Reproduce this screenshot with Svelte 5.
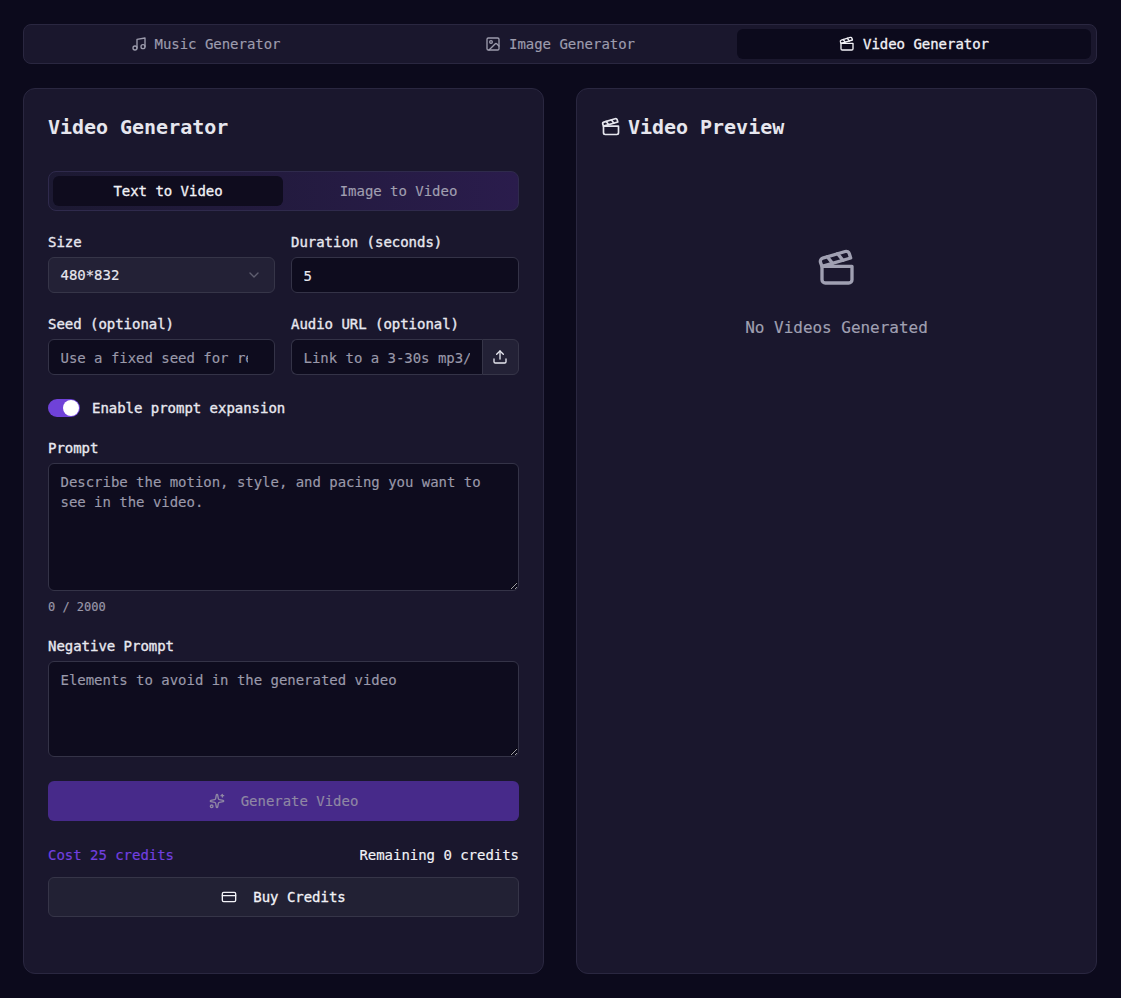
<script lang="ts">
  let prompt = $state('');
  let negative = $state('');
  let expand = $state(true);
  let mode = $state('text');
  const tabs = [
    { id: 'music', label: 'Music Generator' },
    { id: 'image', label: 'Image Generator' },
    { id: 'video', label: 'Video Generator' }
  ];
  let active = $state('video');
</script>

{#snippet clapper(size)}
  <svg width={size} height={size} viewBox="0 0 24 24" fill="none" stroke="currentColor" stroke-width="2" stroke-linecap="round" stroke-linejoin="round">
    <path d="M20.2 6 3 11l-.9-2.4c-.3-1.1.3-2.2 1.3-2.5l13.5-4c1.1-.3 2.2.3 2.5 1.3Z" />
    <path d="m6.2 5.3 3.1 3.9" />
    <path d="m12.4 3.4 3.1 4" />
    <path d="M3 11h18v8a2 2 0 0 1-2 2H5a2 2 0 0 1-2-2Z" />
  </svg>
{/snippet}

<div class="page">
  <nav class="tabs">
    {#each tabs as tab}
      <button class="tab" class:active={active === tab.id} onclick={() => (active = tab.id)}>
        {#if tab.id === 'music'}
          <svg width="16" height="16" viewBox="0 0 24 24" fill="none" stroke="currentColor" stroke-width="2" stroke-linecap="round" stroke-linejoin="round">
            <path d="M9 18V5l12-2v13" /><circle cx="6" cy="18" r="3" /><circle cx="18" cy="16" r="3" />
          </svg>
        {:else if tab.id === 'image'}
          <svg width="16" height="16" viewBox="0 0 24 24" fill="none" stroke="currentColor" stroke-width="2" stroke-linecap="round" stroke-linejoin="round">
            <rect width="18" height="18" x="3" y="3" rx="2" ry="2" /><circle cx="9" cy="9" r="2" /><path d="m21 15-3.086-3.086a2 2 0 0 0-2.828 0L6 21" />
          </svg>
        {:else}
          {@render clapper(16)}
        {/if}
        {tab.label}
      </button>
    {/each}
  </nav>

  <main class="columns">
    <section class="card form">
      <h2>Video Generator</h2>

      <div class="mode">
        <button class:on={mode === 'text'} onclick={() => (mode = 'text')}>Text to Video</button>
        <button class:on={mode === 'image'} onclick={() => (mode = 'image')}>Image to Video</button>
      </div>

      <div class="pair">
        <div class="field">
          <span class="label">Size</span>
          <div class="select">
            <span>480*832</span>
            <svg width="16" height="16" viewBox="0 0 24 24" fill="none" stroke="currentColor" stroke-width="2" stroke-linecap="round" stroke-linejoin="round"><path d="m6 9 6 6 6-6" /></svg>
          </div>
        </div>
        <div class="field">
          <span class="label">Duration (seconds)</span>
          <input class="input" type="text" value="5" />
        </div>
      </div>

      <div class="pair second">
        <div class="field">
          <span class="label">Seed (optional)</span>
          <input class="input seed" type="text" placeholder="Use a fixed seed for reproducible results" />
        </div>
        <div class="field">
          <span class="label">Audio URL (optional)</span>
          <div class="group">
            <input class="input" type="text" placeholder="Link to a 3-30s mp3/wav file" />
            <button class="upload" aria-label="Upload">
              <svg width="16" height="16" viewBox="0 0 24 24" fill="none" stroke="currentColor" stroke-width="2" stroke-linecap="round" stroke-linejoin="round">
                <path d="M21 15v4a2 2 0 0 1-2 2H5a2 2 0 0 1-2-2v-4" /><polyline points="17 8 12 3 7 8" /><line x1="12" x2="12" y1="3" y2="15" />
              </svg>
            </button>
          </div>
        </div>
      </div>

      <div class="switch-row">
        <button class="switch" class:checked={expand} aria-label="Toggle" onclick={() => (expand = !expand)}><span></span></button>
        <span class="label">Enable prompt expansion</span>
      </div>

      <div class="field prompt">
        <span class="label">Prompt</span>
        <textarea class="input area tall" bind:value={prompt} placeholder="Describe the motion, style, and pacing you want to see in the video."></textarea>
        <span class="count">{prompt.length} / 2000</span>
      </div>

      <div class="field negative">
        <span class="label">Negative Prompt</span>
        <textarea class="input area short" bind:value={negative} placeholder="Elements to avoid in the generated video"></textarea>
      </div>

      <button class="generate" disabled>
        <svg width="16" height="16" viewBox="0 0 24 24" fill="none" stroke="currentColor" stroke-width="2" stroke-linecap="round" stroke-linejoin="round">
          <path d="M11.017 2.814a1 1 0 0 1 1.966 0l1.051 5.558a2 2 0 0 0 1.594 1.594l5.558 1.051a1 1 0 0 1 0 1.966l-5.558 1.051a2 2 0 0 0-1.594 1.594l-1.051 5.558a1 1 0 0 1-1.966 0l-1.051-5.558a2 2 0 0 0-1.594-1.594l-5.558-1.051a1 1 0 0 1 0-1.966l5.558-1.051a2 2 0 0 0 1.594-1.594z" />
          <path d="M20 2v4" /><path d="M22 4h-4" /><circle cx="4" cy="20" r="2" />
        </svg>
        Generate Video
      </button>

      <div class="credits">
        <span class="cost">Cost 25 credits</span>
        <span class="remaining">Remaining 0 credits</span>
      </div>

      <button class="buy">
        <svg width="16" height="16" viewBox="0 0 24 24" fill="none" stroke="currentColor" stroke-width="2" stroke-linecap="round" stroke-linejoin="round">
          <rect width="20" height="14" x="2" y="5" rx="2" /><line x1="2" x2="22" y1="10" y2="10" />
        </svg>
        Buy Credits
      </button>
    </section>

    <section class="card preview">
      <h2 class="with-icon">{@render clapper(20)} Video Preview</h2>
      <div class="empty">
        {@render clapper(40)}
        <p>No Videos Generated</p>
      </div>
    </section>
  </main>
</div>

<style>
  :global(body) {
    background: #0c0a1c;
    color-scheme: dark;
  }

  .page {
    box-sizing: border-box;
    height: 998px;
    padding: 24px 24px 24px 23px;
    display: flex;
    flex-direction: column;
    gap: 24px;
    font-family: "DejaVu Sans Mono", "Liberation Mono", monospace;
    font-size: 14px;
    letter-spacing: -0.002em;
    -webkit-text-stroke: 0.15px;
    color: #e8e8f0;
  }

  button,
  input,
  textarea {
    font: inherit;
    letter-spacing: inherit;
  }

  .tabs {
    display: grid;
    grid-template-columns: repeat(3, 1fr);
    height: 40px;
    box-sizing: border-box;
    padding: 4px 5px;
    background: #1a172d;
    border: 1px solid #2a2740;
    border-radius: 8px;
  }

  .tab {
    display: flex;
    align-items: center;
    justify-content: center;
    gap: 8px;
    background: none;
    border: 0;
    border-radius: 6px;
    color: #9d9cad;
    padding: 0;
  }

  .tab:first-child {
    gap: 7px;
  }

  .tab.active {
    background: #0c0a1c;
    color: #f2f2f7;
    -webkit-text-stroke: 0.3px;
  }

  .columns {
    flex: 1;
    display: grid;
    grid-template-columns: 1fr 1fr;
    gap: 32px;
  }

  .card {
    box-sizing: border-box;
    background: #1a172d;
    border: 1px solid #2a2740;
    border-radius: 12px;
    padding: 24px;
    min-width: 0;
  }

  h2 {
    margin: 0;
    font-size: 20px;
    line-height: 28px;
    font-weight: 700;
    -webkit-text-stroke: 0;
    color: #e6e6ee;
  }

  .with-icon {
    display: flex;
    align-items: center;
    gap: 7px;
  }

  .mode {
    display: grid;
    grid-template-columns: 230px 1fr;
    box-sizing: border-box;
    height: 40px;
    margin-top: 30px;
    padding: 4px;
    border: 1px solid #2f2a4c;
    border-radius: 8px;
    background: linear-gradient(90deg, #1c1932, #2a1c4c);
  }

  .mode button {
    background: none;
    border: 0;
    border-radius: 6px;
    color: #a09fb0;
    padding: 0;
  }

  .mode button.on {
    background: #0f0c1e;
    color: #f2f2f7;
    -webkit-text-stroke: 0.3px;
  }

  .pair {
    display: grid;
    grid-template-columns: 227px 228px;
    gap: 16px;
    margin-top: 21px;
  }

  .field {
    display: flex;
    flex-direction: column;
    min-width: 0;
  }

  .label {
    font-size: 14px;
    line-height: 20px;
    color: #e8e8f0;
    -webkit-text-stroke: 0.35px;
  }

  .field > .label {
    margin-bottom: 5px;
  }

  .input {
    box-sizing: border-box;
    width: 100%;
    height: 36px;
    padding: 1px 12px 0 11.5px;
    background: #0e0c1e;
    border: 1px solid #343347;
    border-radius: 6px;
    color: #e8e8f0;
    outline: none;
  }

  .input::placeholder {
    color: #9a99aa;
    opacity: 1;
  }

  .seed {
    padding-right: 26px;
  }

  .select {
    box-sizing: border-box;
    height: 36px;
    display: flex;
    align-items: center;
    justify-content: space-between;
    padding: 0 12px 0 11.5px;
    background: #232136;
    border: 1px solid #363548;
    border-radius: 6px;
    color: #e8e8f0;
  }

  .select svg {
    color: #5f5e70;
  }

  .group {
    display: flex;
  }

  .group .input {
    flex: 1;
    min-width: 0;
    border-right: 0;
    border-radius: 6px 0 0 6px;
  }

  .upload {
    flex: none;
    width: 37px;
    height: 36px;
    display: flex;
    align-items: center;
    justify-content: center;
    padding: 0 1px 0 0;
    background: #232136;
    border: 1px solid #363548;
    border-radius: 0 6px 6px 0;
    color: #e8e8f0;
  }

  .switch-row {
    display: flex;
    align-items: center;
    gap: 12px;
    margin-top: 23px;
    height: 20px;
  }

  .switch {
    position: relative;
    width: 32px;
    height: 18px;
    padding: 0;
    border: 0;
    border-radius: 9px;
    background: #3a3848;
  }

  .switch.checked {
    background: #6f42d8;
  }

  .switch span {
    position: absolute;
    top: 1px;
    left: 1px;
    width: 16px;
    height: 16px;
    border-radius: 50%;
    background: #fff;
  }

  .switch.checked span {
    left: 15px;
  }

  .prompt {
    margin-top: 20px;
  }

  .area {
    display: block;
    padding: 8px 12px 8px 11.5px;
    line-height: 20px;
    resize: vertical;
  }

  .tall {
    height: 128px;
  }

  .short {
    height: 96px;
  }

  .count {
    margin-top: 8px;
    font-size: 12px;
    line-height: 16px;
    color: #9a99aa;
  }

  .negative {
    margin-top: 21px;
  }

  .generate {
    display: flex;
    align-items: center;
    justify-content: center;
    gap: 16px;
    width: 100%;
    height: 40px;
    margin-top: 24px;
    padding: 0;
    background: #472a8a;
    border: 0;
    border-radius: 6px;
    color: #8f87a4;
  }

  .credits {
    display: flex;
    justify-content: space-between;
    margin-top: 24px;
    line-height: 20px;
  }

  .cost {
    color: #7340e0;
  }

  .remaining {
    color: #f2f2f7;
  }

  .buy {
    display: flex;
    align-items: center;
    justify-content: center;
    gap: 16px;
    width: 100%;
    height: 40px;
    margin-top: 12px;
    padding: 0;
    background: #222134;
    border: 1px solid #363548;
    border-radius: 6px;
    color: #f2f2f7;
    -webkit-text-stroke: 0.3px;
  }

  .empty {
    display: flex;
    flex-direction: column;
    align-items: center;
    margin-top: 107px;
    color: #a0a0b2;
  }

  .empty p {
    margin: 28px 0 0;
    font-size: 16px;
    line-height: 24px;
  }
</style>
